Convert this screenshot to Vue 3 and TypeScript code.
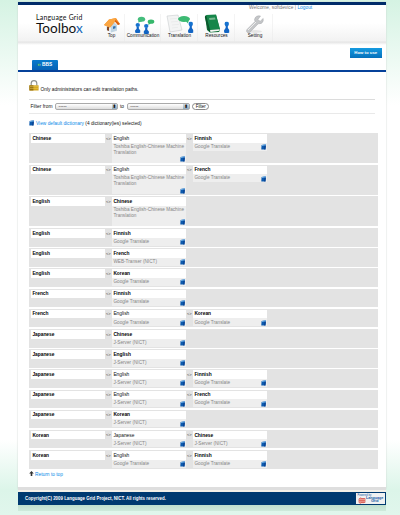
<script setup lang="ts">
interface Hop {
  lang: string
  service: string
  bold?: boolean
}
interface Path {
  source: string
  hops: Hop[]
  tall?: boolean
}

const google = 'Google Translate'
const jserver = 'J-Server (NICT)'
const toshiba = 'Toshiba English-Chinese Machine Translation'

const hop = (lang: string, service: string, bold = false): Hop => ({ lang, service, bold })

const paths: Path[] = [
  { source: 'Chinese', tall: true, hops: [hop('English', toshiba), hop('Finnish', google, true)] },
  { source: 'Chinese', tall: true, hops: [hop('English', toshiba), hop('French', google, true)] },
  { source: 'English', tall: true, hops: [hop('Chinese', toshiba, true)] },
  { source: 'English', hops: [hop('Finnish', google, true)] },
  { source: 'English', hops: [hop('French', 'WEB-Transer (NICT)', true)] },
  { source: 'English', hops: [hop('Korean', google, true)] },
  { source: 'French', hops: [hop('Finnish', google, true)] },
  { source: 'French', hops: [hop('English', google), hop('Korean', google, true)] },
  { source: 'Japanese', hops: [hop('Chinese', jserver, true)] },
  { source: 'Japanese', hops: [hop('English', jserver, true)] },
  { source: 'Japanese', hops: [hop('English', jserver), hop('Finnish', google, true)] },
  { source: 'Japanese', hops: [hop('English', jserver), hop('French', google, true)] },
  { source: 'Japanese', hops: [hop('Korean', jserver, true)] },
  { source: 'Korean', hops: [hop('Japanese', jserver), hop('Chinese', jserver, true)] },
  { source: 'Korean', hops: [hop('English', google), hop('Finnish', google, true)] },
]
</script>

<template>
  <div class="screen">
    <svg class="defs" width="0" height="0" aria-hidden="true">
      <symbol id="person" viewBox="0 0 6 12" preserveAspectRatio="none">
        <circle cx="3" cy="2.5" r="2.4" fill="#1672cf" />
        <path d="M1.8 4.5h2.4v2.4L5.9 9v2.4Q3 12.6.1 11.4V9L1.8 6.9z" fill="#1265c4" />
      </symbol>
      <symbol id="book" viewBox="0 0 5 6">
        <path d="M.6.9 4.9.3 4.5 5.6H.3z" fill="#0c5aae" />
        <path d="M.9.9 4.9.3v1L.8 1.9z" fill="#78b5e8" />
        <path d="M3.5 2 4.8 1.7 4.4 5.6H3.3z" fill="#063c8c" />
      </symbol>
    </svg>
    <div class="page">
      <header class="header">
        <div class="logo">
          <div class="logo-small">Language Grid</div>
          <div class="logo-big">Toolbo<span>x</span></div>
        </div>
        <nav class="nav">
          <a class="item top">
            <svg viewBox="0 0 18 16">
              <path d="M3 8 8 5l6 3v6l-6 1.5L3 13z" fill="#e5edf3" />
              <path d="m8 15.5 6-2V8l-3-3-3 4z" fill="#c0d4e2" />
              <path d="M1 8 6 2.5 13 1l4 6-2 1-3-3.5-5 6z" fill="#f28c24" />
              <path d="M6 2.5 13 1l-1 3.5-5 6L1 8z" fill="#fba642" />
              <path d="m12 3 5 4-2 1-3-3.5z" fill="#d75d11" />
              <path d="M4 9.7 6 10v4l-2-.8z" fill="#854a28" />
              <path d="m10 9.5 2.5-.6v2.4l-2.5.6z" fill="#3372b0" />
            </svg>
            <span>Top</span>
          </a>
          <a class="item comm">
            <svg viewBox="0 0 24 20">
              <ellipse cx="8.5" cy="5.3" rx="3.7" ry="2.5" fill="#44bd7c" />
              <path d="m6 6-1 2.4 4-1z" fill="#44bd7c" />
              <ellipse cx="18" cy="7.7" rx="3.3" ry="2.1" fill="#35b76b" />
              <path d="m16 8.5-1 2.2 3-1z" fill="#35b76b" />
              <use href="#person" x="2" y="9" width="5.5" height="10" />
              <use href="#person" x="10.5" y="10" width="5.5" height="10" />
            </svg>
            <span>Communication</span>
          </a>
          <a class="item trans">
            <svg viewBox="0 0 28 20">
              <path d="m1 2 11-1 4 15-12 2z" fill="#f3f4f4" stroke="#c9cdce" stroke-width=".6" />
              <path d="m4 5 7-.7M5 8l7-.7M6 11l7-.7M6 14l6-.7" stroke="#e0e2e3" stroke-width=".5" />
              <ellipse cx="18" cy="5" rx="6" ry="2.9" fill="#3dba73" />
              <path d="m19 6.5 3 3 1-4z" fill="#3dba73" />
              <use href="#person" x="22" y="7.5" width="5.5" height="11.5" />
            </svg>
            <span>Translation</span>
          </a>
          <a class="item res">
            <svg viewBox="0 0 26 20">
              <path d="m1 2 11-1 4 15-1 2-9 .5L3 16z" fill="#12713a" />
              <path d="m2 1 10-.4 4 14.4-10 .8z" fill="#16864a" />
              <path d="m2 1 4 15v2l-2-2L.8 3z" fill="#0b572c" />
              <path d="m6 16 9.5-.8v1.6L6.5 18z" fill="#f5f6f4" />
              <path d="m5 4 6-.5.5 2-6 .5z" fill="#79b890" />
              <use href="#person" x="20" y="7.5" width="5.5" height="11.5" />
            </svg>
            <span>Resources</span>
          </a>
          <a class="item setting">
            <svg viewBox="0 0 20 20">
              <ellipse cx="10" cy="17.5" rx="7" ry="1.5" fill="#e5e5e5" />
              <path d="M15.5 2q-5-1-6 3.5l.5 2-8 8q-1.2 2 .4 3 1.5.9 2.8-.5l8-8.2q4 .5 5-2.8V4.5l-3 2.7-2.4-1.5z" fill="#c4c6c8" stroke="#a4a7aa" stroke-width=".5" />
              <path d="m3 16 8-8" stroke="#ededed" stroke-width="1" />
            </svg>
            <span>Setting</span>
          </a>
        </nav>
        <div class="user">Welcome, softdevice | <a>Logout</a></div>
      </header>
      <div class="tools">
        <a class="tab"><b>››</b> BBS</a>
        <a class="howto">How to use</a>
      </div>
      <main class="content">
        <div class="notice">
          <svg viewBox="0 0 10 11">
            <path d="M2.2 5.5V3.2Q2.4.7 5 .7t2.8 2.5v2.3" fill="none" stroke="#8e918f" stroke-width="1.2" />
            <path d="M.4 5.3h9.2v5.2H.4z" fill="#d3a51f" />
            <path d="M.4 5.3h4v5.2h-4z" fill="#957013" />
            <path d="M1 6.6h8M1 8.4h8" stroke="#f0d361" stroke-width=".5" />
          </svg>
          <span>Only administrators can edit translation paths.</span>
        </div>
        <div class="filter">
          <span class="from">Filter from</span>
          <span class="select"><span>-----</span><i>⬍</i></span>
          <span class="to">to</span>
          <span class="select"><span>-----</span><i>⬍</i></span>
          <span class="button">Filter</span>
        </div>
        <div class="dictionary">
          <svg class="book"><use href="#book" /></svg>
          <a>View default dictionary</a><span>(4 dictionary(ies) selected)</span>
        </div>
        <div class="paths">
          <div v-for="(path, i) in paths" :key="i" class="path" :class="{ tall: path.tall }">
            <div class="cell"><div class="lang bold">{{ path.source }}</div></div>
            <template v-for="(h, j) in path.hops" :key="j">
              <span class="arrow">&lt;&gt;</span>
              <div class="cell">
                <div class="lang" :class="{ bold: h.bold }">{{ h.lang }}</div>
                <div class="service" :class="{ long: path.tall && h.service === toshiba }">
                  <span>{{ h.service }}</span>
                  <svg class="book"><use href="#book" /></svg>
                </div>
              </div>
            </template>
          </div>
        </div>
        <div class="return">
          <svg viewBox="0 0 5 5"><path d="M2.5 0 4.8 2.4H3.3V5H1.7V2.4H.2z" fill="#333" /></svg>
          <a>Return to top</a>
        </div>
      </main>
      <footer class="footer">
        <span class="copy">Copyright(C) 2009 Language Grid Project, NICT. All rights reserved.</span>
        <div class="badge">
          <div class="powered">Powered by</div>
          <div class="brand">
            <svg viewBox="0 0 8 7"><path d="M1 1.8 3 .8v5.5l-2-.7zM3 1.5h4v4H3M1 3.7h6M5 1v5.3" fill="#f5c5bf" stroke="#d64b40" stroke-width=".7" /></svg>
            <span>Language<br />Grid</span>
          </div>
        </div>
      </footer>
      <div class="shade"></div>
    </div>
  </div>
</template>

<style>
body {
  margin: 0;
}
</style>

<style scoped>
* {
  box-sizing: border-box;
}
.screen {
  width: 400px;
  height: 515px;
  padding: 1.5px 14px 0 18px;
  overflow: hidden;
  font: 5px/6px "Liberation Sans", Arial, sans-serif;
  color: #111;
  background: linear-gradient(#d5f3e3 0, #fff 105px, #fff 440px, #dcf5e9 490px, #e0f6ec 515px);
}
.defs {
  position: absolute;
}
.page {
  width: 368px;
  height: 487px;
  background: #fff;
  box-shadow: 0 0 1.5px #c7cdca;
}
a {
  color: #078ae8;
  white-space: nowrap;
}
.header {
  display: flex;
  height: 43.5px;
  padding-left: 18px;
  border-top: 3.5px solid #002b69;
  background: linear-gradient(#fff 0, #fff 18px, #f2f2f2 36px, #e4e4e4 37px, #fff 40px);
}
.logo {
  width: 62px;
  flex: none;
  padding-top: 9px;
  color: #111;
  font-family: Lato, sans-serif;
}
.logo-small {
  font-size: 6.9px;
  line-height: 7px;
  letter-spacing: 0.23px;
  white-space: nowrap;
}
.logo-big {
  margin-top: 1px;
  font-size: 13.6px;
  line-height: 13px;
  letter-spacing: 0;
}
.logo-big span {
  color: #1268b7;
}
.nav {
  display: flex;
  flex: none;
  width: 175px;
  padding-top: 9px;
}
.item {
  display: flex;
  height: 28px;
  flex-direction: column;
  align-items: center;
  color: #111;
  font-size: 4.7px;
  line-height: 5px;
  background: linear-gradient(90deg, transparent calc(100% - 1px), #e9e9e9 100%);
}
.item svg {
  display: block;
  height: 20px;
}
.item span {
  margin-top: -0.5px;
}
.top { width: 27px; }
.top svg { width: 18px; height: 16px; margin: 3.5px 0 0.5px 1px; }
.comm { width: 36px; }
.comm svg { width: 24px; margin-left: 4px; }
.trans { width: 37px; }
.trans svg { width: 28px; margin-left: 1px; }
.res { width: 37px; }
.res svg { width: 26px; margin-left: 1px; }
.setting { width: 38px; padding-left: 2px; }
.setting svg { width: 20px; }
.user {
  width: 66px;
  height: 6px;
  margin: 0.5px 0 0 -24px;
  flex: none;
  color: #777;
  font-size: 4.83px;
  white-space: nowrap;
}
.tools {
  display: flex;
  height: 27px;
  padding: 0 4px 0 14px;
  align-items: flex-end;
  justify-content: space-between;
  border-bottom: 2.5px solid #05419a;
}
.tab {
  width: 26px;
  height: 10.5px;
  padding-left: 5.5px;
  border-radius: 1px 1px 0 0;
  background: linear-gradient(#087bcd, #0762b5);
  color: #fff;
  font-size: 4.8px;
  font-weight: bold;
  line-height: 10px;
}
.tab b {
  color: #9cdb51;
}
.howto {
  width: 32.5px;
  height: 10px;
  margin-bottom: 11.7px;
  background: linear-gradient(#159be0, #0670bb);
  color: #fff;
  font-size: 4.3px;
  font-weight: bold;
  line-height: 10px;
  text-align: center;
}
.content {
  height: 415px;
  padding: 8px 8px 0 11px;
}
.notice {
  display: flex;
  height: 19px;
  align-items: flex-start;
  font-size: 4.83px;
}
.notice svg {
  width: 10px;
  height: 11px;
  margin-right: 1.5px;
}
.notice span {
  padding-top: 6.6px;
}
.filter {
  display: flex;
  width: 346px;
  height: 15px;
  align-items: center;
  border-top: 1px solid #dcdcdc;
  border-bottom: 1px solid #e9e9e9;
  font-size: 4.9px;
}
.from { width: 26px; padding-left: 1.5px; white-space: nowrap; }
.to { width: 8.8px; padding-left: 2px; }
.select {
  display: flex;
  width: 63px;
  height: 7px;
  align-items: center;
  justify-content: space-between;
  border: 1px solid #aaa;
  border-radius: 2px;
  background: linear-gradient(#fff, #ddd);
  padding-left: 2.5px;
}
.select i {
  width: 5.5px;
  height: 5px;
  background: linear-gradient(#d2dce4, #8faabf);
  font: bold 5px/5px "DejaVu Sans", sans-serif;
  text-align: center;
}
.button {
  width: 17px;
  height: 7.5px;
  margin-left: 2.5px;
  border: 1px solid #888;
  border-radius: 4px;
  font-size: 4.5px;
  line-height: 5.5px;
  text-align: center;
}
.dictionary {
  display: flex;
  height: 19px;
  padding-top: 6px;
  align-items: flex-start;
  font-size: 4.8px;
}
.dictionary a {
  margin: 1.2px 1.4px 0 2px;
}
.dictionary span {
  margin-top: 1.2px;
}
.book {
  display: block;
  width: 5px;
  height: 6px;
  flex: none;
}
.paths {
  display: grid;
  gap: 1.7px;
}
.path {
  display: flex;
  width: 348.7px;
  height: 18.5px;
  padding: 1px 1.7px 0.5px;
  background: #e3e3e3;
}
.tall {
  height: 30px;
}
.cell {
  width: 74px;
  flex: none;
}
.lang {
  height: 8.5px;
  padding: 0.6px 0 0 1.7px;
  background: #fff;
  color: #111;
  font-size: 4.85px;
  line-height: 7px;
}
.bold {
  color: #000;
  font-weight: bold;
}
.arrow {
  width: 7px;
  flex: none;
  padding-top: 0.5px;
  color: #444;
  font-size: 4.2px;
  line-height: 7px;
  letter-spacing: -0.2px;
  text-align: center;
}
.service {
  display: flex;
  height: 8px;
  padding: 0.5px 1.2px 0.5px 1.7px;
  justify-content: space-between;
  align-items: flex-end;
  background: #eee;
  color: #858585;
  font-size: 4.7px;
  line-height: 6px;
}
.service span {
  width: 73px;
  height: 100%;
  margin-right: -7px;
  flex: none;
  padding-top: 0.7px;
}
.long {
  height: 20px;
}
.return {
  display: flex;
  padding-top: 2.5px;
  font-size: 4.85px;
}
.return svg {
  width: 5px;
  height: 5px;
  margin-right: 1px;
}
.return a {
  padding-top: 0.5px;
}
.footer {
  display: flex;
  height: 18px;
  padding: 5px 1px 0 7px;
  align-items: center;
  justify-content: space-between;
  background: linear-gradient(#dedede 0, #dedede 3px, #f3f0e8 3px, #f3f0e8 5px, #003a70 5px);
}
.copy {
  color: #fff;
  font-size: 4.42px;
  font-weight: bold;
}
.badge {
  width: 29.5px;
  height: 11px;
  padding: 0.5px 0.5px 0 2px;
  background: #f0f1f1;
  color: #155ba4;
}
.powered {
  font-size: 2.6px;
  line-height: 3px;
}
.brand {
  display: flex;
  gap: 0.5px;
  font-size: 3.7px;
  font-weight: bold;
  line-height: 3.5px;
  text-align: center;
}
.brand svg {
  width: 8px;
  height: 7px;
  flex: none;
}
.shade {
  height: 6px;
  background: linear-gradient(#bfdfce, #cfeadc);
}
</style>
